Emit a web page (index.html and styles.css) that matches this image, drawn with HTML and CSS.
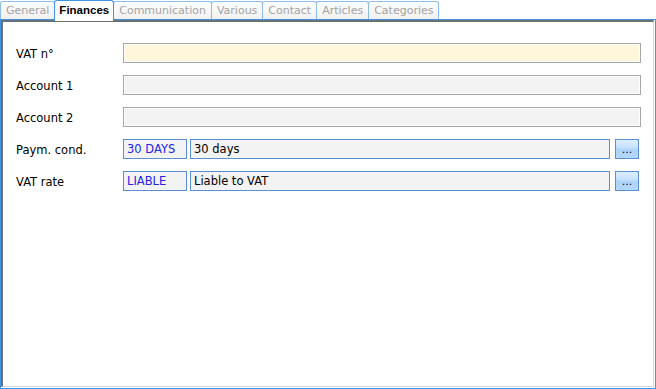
FILE: index.html
```html
<!DOCTYPE html>
<html lang="en">
<head>
  <meta charset="UTF-8">
  <title>Finances</title>
  <link rel="stylesheet" href="styles.css">
</head>
<body>

<div class="tabs">
  <div class="tab">General</div>
  <div class="tab active">Finances</div>
  <div class="tab">Communication</div>
  <div class="tab">Various</div>
  <div class="tab">Contact</div>
  <div class="tab">Articles</div>
  <div class="tab">Categories</div>
</div>

<div class="frame">
  <div class="inner">
    <div class="form">
      <div class="label">VAT n°</div>
      <div class="field yellow"></div>

      <div class="label">Account 1</div>
      <div class="field"></div>

      <div class="label">Account 2</div>
      <div class="field"></div>

      <div class="label">Paym. cond.</div>
      <div class="combo">
        <div class="code">30 DAYS</div>
        <div class="desc">30 days</div>
        <div class="btn">...</div>
      </div>

      <div class="label">VAT rate</div>
      <div class="combo">
        <div class="code">LIABLE</div>
        <div class="desc">Liable to VAT</div>
        <div class="btn">...</div>
      </div>
    </div>
  </div>
</div>

</body>
</html>
```

FILE: styles.css
```css
body {
  margin: 0;
  padding: 0;
  background-color: #fff;
  font-family: 'DejaVu Sans', Verdana, sans-serif;
  font-size: 11px;
  color: #000;
  width: 656px;
  height: 389px;
  overflow: hidden;
}

.tabs {
  display: flex;
  align-items: flex-end;
  height: 19px;
  position: relative;
  z-index: 1;
}

.tab {
  box-sizing: border-box;
  height: 18px;
  padding: 0 5px;
  line-height: 17px;
  color: #a3a3a3;
  border: 1px solid #8cbcec;
  border-bottom: none;
  border-radius: 3px 3px 0 0;
  background: linear-gradient(#ffffff, #f0f0f0);
  margin-right: -1px;
}

.tab.active {
  height: 21px;
  margin-bottom: -2px;
  line-height: 18px;
  padding: 0 4px;
  font-family: 'Liberation Sans', Arial, sans-serif;
  font-size: 11.5px;
  color: #000;
  font-weight: bold;
  background: #fff;
  border-color: #3d95e8;
  position: relative;
  z-index: 2;
}

.frame {
  box-sizing: border-box;
  height: 370px;
  border: 1px solid #3d95e8;
}

.inner {
  box-sizing: border-box;
  height: 367px;
  margin-right: 1px;
  border-top: 2px solid #6f6f6f;
  border-left: 2px solid #6f6f6f;
  border-right: 1px solid #d6d6d6;
  border-bottom: 1px solid #d6d6d6;
  padding: 21px 12px 0 13px;
}

.form {
  display: grid;
  grid-template-columns: 107px 1fr;
  row-gap: 12px;
  align-items: center;
  font-size: 11.5px;
}

.label {
  padding-top: 1px;
}

.field,
.code,
.desc,
.btn {
  box-sizing: border-box;
  height: 20px;
}

.field {
  border: 1px solid #a6a6aa;
  box-shadow: inset 0 0 0 1px #fff;
  background: #f3f3f3;
}

.field.yellow {
  background: #fff6dc;
}

.combo {
  display: flex;
  gap: 3px;
}

.code,
.desc {
  border: 1px solid #5b8fd4;
  background: #f3f3f3;
  line-height: 18px;
  padding-left: 3px;
}

.code {
  width: 64px;
  color: #2323e6;
}

.desc {
  flex: 1;
  color: #000;
}

.btn {
  width: 24px;
  margin-left: 2px;
  margin-right: 2px;
  border: 1px solid #5b8fd4;
  background: linear-gradient(#dcedff 0%, #c4e0ff 45%, #add4ff 50%, #b3d7ff 100%);
  text-align: center;
  line-height: 20px;
  font-size: 11px;
}
```
